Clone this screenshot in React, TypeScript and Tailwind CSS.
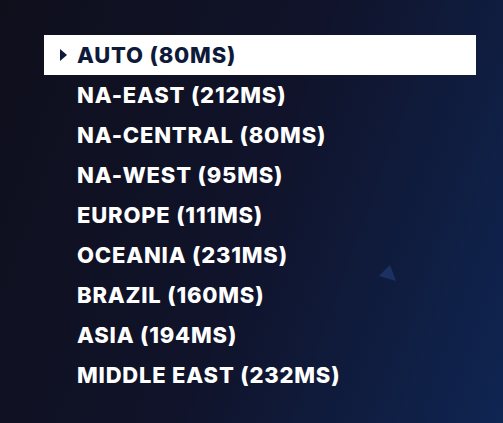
const regions = [
  "AUTO (80MS)",
  "NA-EAST (212MS)",
  "NA-CENTRAL (80MS)",
  "NA-WEST (95MS)",
  "EUROPE (111MS)",
  "OCEANIA (231MS)",
  "BRAZIL (160MS)",
  "ASIA (194MS)",
  "MIDDLE EAST (232MS)",
];

export default function App() {
  const selected = 0;
  return (
    <div className="relative h-[423px] w-[503px] overflow-hidden bg-[linear-gradient(110deg,#0f0f1c_0%,#10132a_50%,#0f2552_100%)] font-['Inter',sans-serif]">
      {/* faint marker */}
      <svg className="absolute left-[378px] top-[264px]" width="20" height="18" viewBox="0 0 20 18">
        <path d="M12 1 L18 17 L1 12 Z" fill="#1a3161" />
      </svg>
      <ul className="flex flex-col pl-[44px] pr-[27px] pt-[35px]">
        {regions.map((r, i) => (
          <li
            key={r}
            className={
              i === selected
                ? "flex h-[40px] items-center bg-white text-[#0e1a3a]"
                : "flex h-[40px] items-center text-white"
            }
          >
            <span className="flex w-[33px] pl-[16px]">
              {i === selected && (
                <svg width="7" height="12" viewBox="0 0 7 12">
                  <path d="M0 0 L7 6 L0 12 Z" fill="#0e1a3a" />
                </svg>
              )}
            </span>
            <span className="text-[22px] font-extrabold tracking-[0.8px]">{r}</span>
          </li>
        ))}
      </ul>
    </div>
  );
}
